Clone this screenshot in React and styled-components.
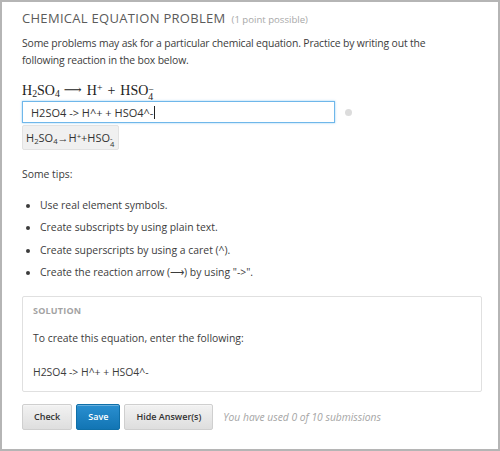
import React from "react";
import styled, { createGlobalStyle } from "styled-components";

const GlobalStyle = createGlobalStyle`
  html, body {
    margin: 0;
    padding: 0;
    background: #fff;
  }
  * {
    box-sizing: border-box;
  }
`;

const Frame = styled.div`
  width: 500px;
  height: 451px;
  border: 2px solid #b5b5b5;
  padding: 7px 16px 0 20px;
  font-family: "Open Sans", "Liberation Sans", sans-serif;
  color: #3c3c3c;
  background: #fff;
`;

const Title = styled.h2`
  margin: 0;
  font-size: 13px;
  font-weight: 400;
  letter-spacing: 0.3px;
  color: #5b5b5b;
  line-height: 18px;
`;

const Points = styled.span`
  font-size: 9.6px;
  letter-spacing: 0;
  color: #a8a8a8;
  margin-left: 6px;
`;

const Text = styled.p`
  margin: ${(p) => p.$margin || "0"};
  max-width: ${(p) => p.$maxWidth || "none"};
  font-size: 10.4px;
  line-height: 17px;
  color: #3c3c3c;
  letter-spacing: ${(p) => (p.$tight ? "-0.15px" : "normal")};
`;

const Equation = styled.div`
  font-family: "Liberation Serif", "DejaVu Serif", serif;
  font-size: 14px;
  color: #222;
  line-height: 16px;
  height: 16px;
  margin-top: 13px;
  white-space: nowrap;
`;

const Sub = styled.sub`
  font-size: 0.7em;
  vertical-align: -0.25em;
  line-height: 0;
`;

const Sup = styled.sup`
  font-size: 0.7em;
  vertical-align: 0.45em;
  line-height: 0;
`;

const Stack = styled.span`
  display: inline-block;
  font-size: 0.7em;
  line-height: 0.75em;
  vertical-align: ${(p) => p.$align || "-0.55em"};
  text-align: left;

  & > span {
    display: block;
  }
`;

const Arrow = styled.span`
  display: inline-block;
  font-size: 12.5px;
  margin: 0 5px 0 4px;
  vertical-align: 1px;
`;

const Plus = styled.span`
  margin: 0 5px;
`;

const InputRow = styled.div`
  display: flex;
  align-items: center;
  margin-top: 3px;
`;

const Field = styled.div`
  width: 313px;
  height: 22px;
  border: 1px solid #6fb7ea;
  box-shadow: 0 0 2px rgba(80, 170, 235, 0.6);
  padding: 0 8px;
  display: flex;
  align-items: center;
  font-size: 11px;
  color: #333;
`;

const Caret = styled.span`
  display: inline-block;
  width: 1px;
  height: 13px;
  background: #222;
  margin-left: 1px;
`;

const Status = styled.span`
  width: 7px;
  height: 7px;
  border-radius: 50%;
  background: #dcdcdc;
  margin-left: 10px;
`;

const Preview = styled.div`
  display: inline-block;
  margin-top: 2px;
  height: 25px;
  line-height: 23px;
  padding: 0 4px 0 3px;
  background: #f0f0f0;
  border: 1px solid #e2e2e2;
  border-radius: 2px;
  font-size: 11px;
  color: #333;
  white-space: nowrap;
`;

const TipList = styled.ul`
  margin: 14px 0 0;
  padding-left: 18px;
  font-size: 10.4px;
  color: #3c3c3c;
`;

const Tip = styled.li`
  line-height: 17px;
  margin-bottom: 5.3px;
`;

const Solution = styled.div`
  margin-top: 15px;
  border: 1px solid #e0e0e0;
  border-radius: 2px;
  padding: 6px 10px 12px;
  height: 96px;
`;

const SolutionLabel = styled.div`
  font-size: 9px;
  font-weight: 700;
  color: #a3a3a3;
  letter-spacing: 0.2px;
  line-height: 16px;
`;

const Actions = styled.div`
  display: flex;
  align-items: center;
  gap: 4px;
  margin-top: 12px;
`;

const Button = styled.button`
  height: 26px;
  padding: 0 11px;
  border-radius: 2px;
  font-family: "Open Sans", "Liberation Sans", sans-serif;
  font-size: 9px;
  font-weight: 600;
  border: 1px solid ${(p) => (p.$primary ? "#0f6fa8" : "#cfcfcf")};
  background: ${(p) =>
    p.$primary
      ? "linear-gradient(#2a8fd0, #1275b4)"
      : "linear-gradient(#f2f2f2, #dedede)"};
  color: ${(p) => (p.$primary ? "#fff" : "#333")};
  box-shadow: inset 0 1px 0 rgba(255, 255, 255, 0.3);
`;

const Note = styled.span`
  margin-left: 6px;
  font-size: 10.3px;
  font-style: italic;
  color: #a5a5a5;
`;

export default function App() {
  return (
    <>
      <GlobalStyle />
      <Frame>
        <Title>
          CHEMICAL EQUATION PROBLEM<Points>(1 point possible)</Points>
        </Title>
        <Text $margin="6px 0 0" $maxWidth="440px" $tight>
          Some problems may ask for a particular chemical equation. Practice by
          writing out the following reaction in the box below.
        </Text>
        <Equation>
          H<Sub>2</Sub>SO<Sub>4</Sub>
          <Arrow>⟶</Arrow>H<Sup>+</Sup>
          <Plus>+</Plus>HSO
          <Stack>
            <span>−</span>
            <span>4</span>
          </Stack>
        </Equation>
        <InputRow>
          <Field>
            H2SO4 -&gt; H^+ + HSO4^-
            <Caret />
          </Field>
          <Status />
        </InputRow>
        <Preview>
          H<Sub>2</Sub>SO<Sub>4</Sub>→H<Sup>+</Sup>+HSO
          <Stack $align="-0.6em">
            <span>-</span>
            <span>4</span>
          </Stack>
        </Preview>
        <Text $margin="16px 0 0">Some tips:</Text>
        <TipList>
          <Tip>Use real element symbols.</Tip>
          <Tip>Create subscripts by using plain text.</Tip>
          <Tip>Create superscripts by using a caret (^).</Tip>
          <Tip>Create the reaction arrow (⟶) by using "-&gt;".</Tip>
        </TipList>
        <Solution>
          <SolutionLabel>SOLUTION</SolutionLabel>
          <Text $margin="11px 0 0">To create this equation, enter the following:</Text>
          <Text $margin="17px 0 0">H2SO4 -&gt; H^+ + HSO4^-</Text>
        </Solution>
        <Actions>
          <Button>Check</Button>
          <Button $primary>Save</Button>
          <Button>Hide Answer(s)</Button>
          <Note>You have used 0 of 10 submissions</Note>
        </Actions>
      </Frame>
    </>
  );
}
